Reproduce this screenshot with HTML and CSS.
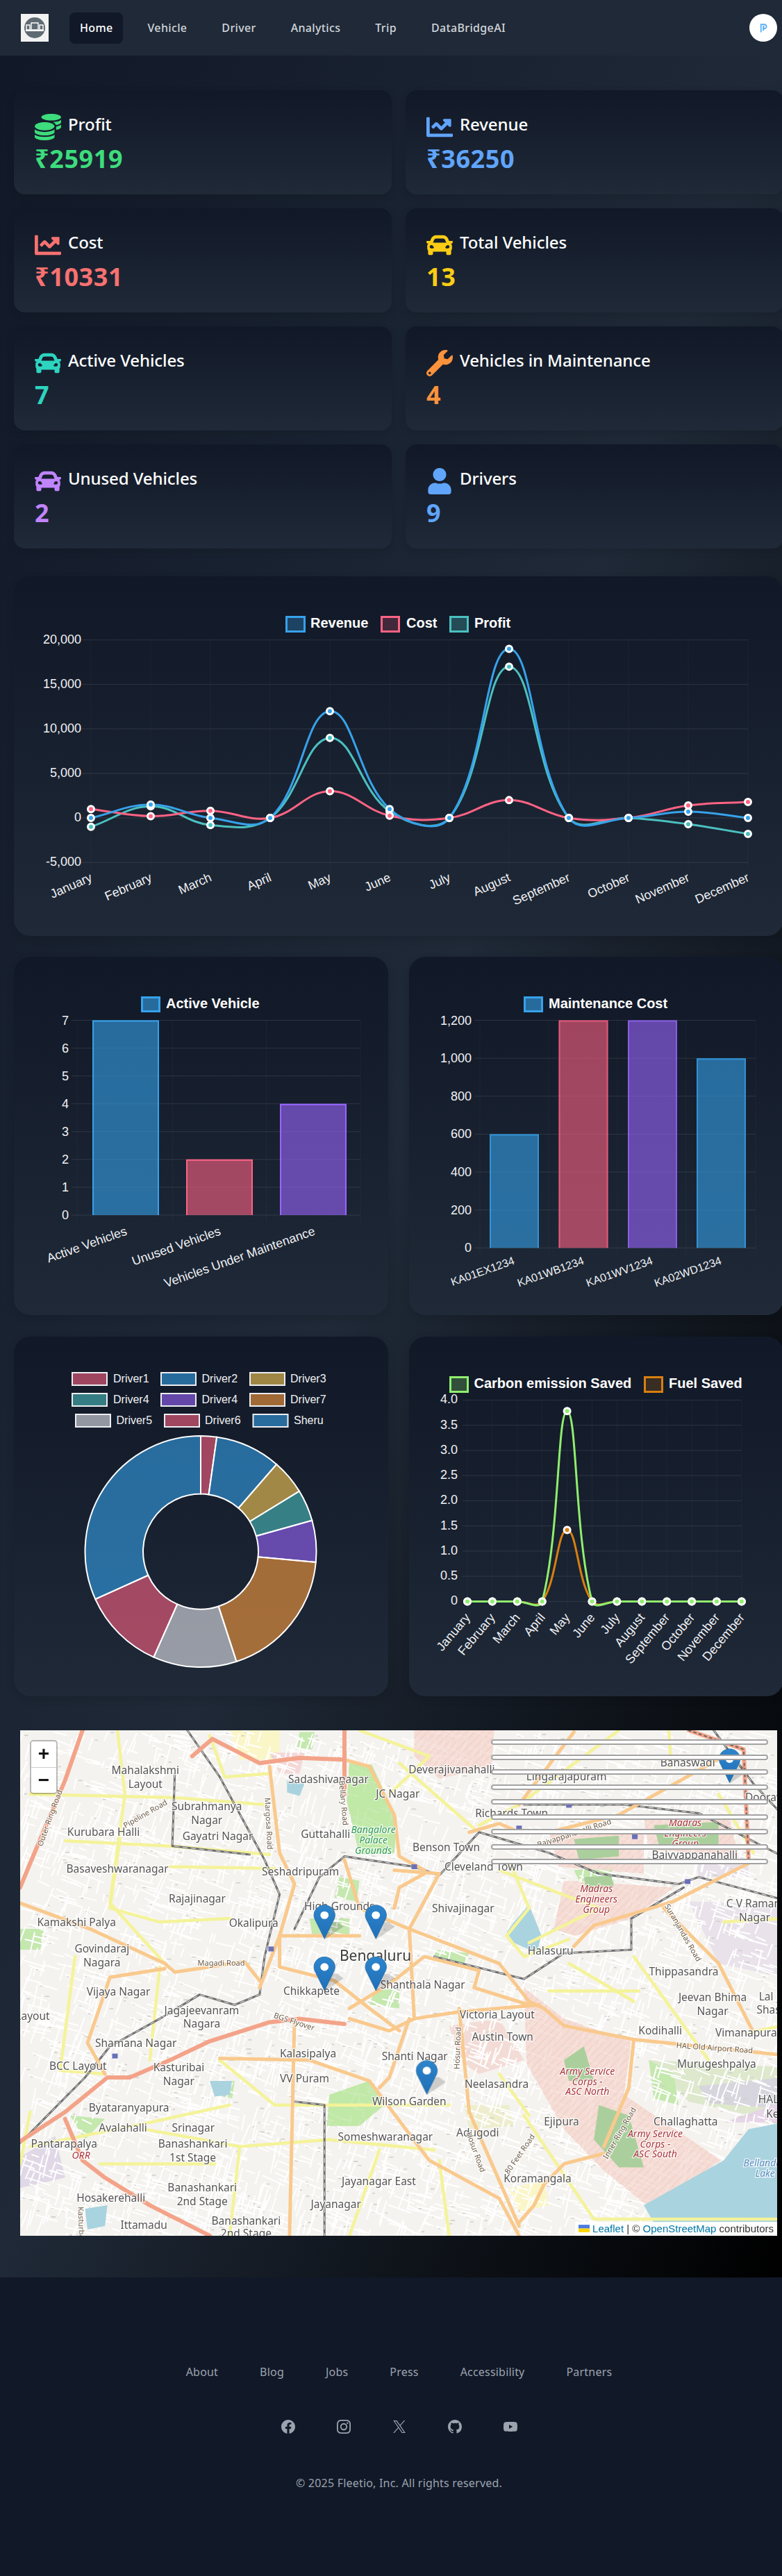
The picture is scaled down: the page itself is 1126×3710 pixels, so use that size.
FILE: index.html
```html
<!DOCTYPE html>
<html lang="en">
<head>
  <meta charset="UTF-8">
  <title>Fleetio Dashboard</title>
  <link rel="stylesheet" href="styles.css">
</head>
<body>

<nav class="topbar">
  <svg class="logo" viewBox="0 0 40 40">
    <rect width="40" height="40" fill="#f2f2f2"/>
    <circle cx="20" cy="20" r="15" fill="#5f6b73"/>
    <path d="M8 16h5v7H8zM15 13h10v10H15zM27 16h5v7h-5z" fill="none" stroke="#fff" stroke-width="1.4"/>
    <path d="M7 24h26" stroke="#fff" stroke-width="2"/>
  </svg>
  <ul class="nav-links">
    <li class="nav-active">Home</li>
    <li>Vehicle</li>
    <li>Driver</li>
    <li>Analytics</li>
    <li>Trip</li>
    <li>DataBridgeAI</li>
  </ul>
  <div class="avatar">
    <svg viewBox="0 0 14 20"><path d="M2 18V3h6.5a4 4 0 0 1 0 8H6.5M6.5 15V7h2" fill="none" stroke="#56aef6" stroke-width="2.4"/></svg>
  </div>
</nav>

<main class="dashboard">

  <section class="stat-grid">
    <div class="stat-card">
      <div class="stat-head">
        <svg class="stat-icon text-green" viewBox="0 0 512 512"><path d="M0 405.3V448c0 35.3 86 64 192 64s192-28.7 192-64v-42.7C342.7 434.4 267.2 448 192 448S41.3 434.4 0 405.3zM320 128c106 0 192-28.7 192-64S426 0 320 0 128 28.7 128 64s86 64 192 64zM0 300.4V352c0 35.3 86 64 192 64s192-28.7 192-64v-51.6c-41.3 34-116.9 51.6-192 51.6S41.3 334.4 0 300.4zm416 11c57.3-11.1 96-31.7 96-55.4v-42.7c-23.2 16.4-57.3 27.6-96 34.5v63.6zM192 160C86 160 0 195.8 0 240s86 80 192 80 192-35.8 192-80-86-80-192-80zm219.3 56.3c60-10.8 100.7-32 100.7-56.3v-42.7c-35.5 25.1-96.5 38.6-160.7 41.8 29.5 14.3 51.2 33.5 60 57.2z"/></svg>
        <h3>Profit</h3>
      </div>
      <p class="stat-value text-green">₹25919</p>
    </div>
    <div class="stat-card">
      <div class="stat-head">
        <svg class="stat-icon text-blue" viewBox="0 0 512 512"><use href="#icon-chart"/></svg>
        <h3>Revenue</h3>
      </div>
      <p class="stat-value text-blue">₹36250</p>
    </div>
    <div class="stat-card">
      <div class="stat-head">
        <svg class="stat-icon text-red" viewBox="0 0 512 512"><use href="#icon-chart"/></svg>
        <h3>Cost</h3>
      </div>
      <p class="stat-value text-red">₹10331</p>
    </div>
    <div class="stat-card">
      <div class="stat-head">
        <svg class="stat-icon text-yellow" viewBox="0 0 512 512"><use href="#icon-car"/></svg>
        <h3>Total Vehicles</h3>
      </div>
      <p class="stat-value text-yellow">13</p>
    </div>
    <div class="stat-card">
      <div class="stat-head">
        <svg class="stat-icon text-teal" viewBox="0 0 512 512"><use href="#icon-car"/></svg>
        <h3>Active Vehicles</h3>
      </div>
      <p class="stat-value text-teal">7</p>
    </div>
    <div class="stat-card">
      <div class="stat-head">
        <svg class="stat-icon text-orange" viewBox="0 0 512 512"><path d="M507.73 109.1c-2.24-9.03-13.54-12.09-20.12-5.51l-74.36 74.36-67.88-11.31-11.31-67.88 74.36-74.36c6.62-6.62 3.43-17.9-5.66-20.16-47.38-11.74-99.55.91-136.58 37.93-39.64 39.64-50.55 97.1-34.05 147.2L18.74 402.76c-24.99 24.99-24.99 65.51 0 90.5 24.99 24.99 65.51 24.99 90.5 0l213.21-213.21c50.12 16.71 107.47 5.68 147.37-34.22 37.07-37.07 49.7-89.32 37.91-136.73zM64 472c-13.25 0-24-10.75-24-24 0-13.26 10.75-24 24-24s24 10.74 24 24c0 13.25-10.75 24-24 24z"/></svg>
        <h3>Vehicles in Maintenance</h3>
      </div>
      <p class="stat-value text-orange">4</p>
    </div>
    <div class="stat-card">
      <div class="stat-head">
        <svg class="stat-icon text-purple" viewBox="0 0 512 512"><use href="#icon-car"/></svg>
        <h3>Unused Vehicles</h3>
      </div>
      <p class="stat-value text-purple">2</p>
    </div>
    <div class="stat-card">
      <div class="stat-head">
        <svg class="stat-icon text-blue" viewBox="0 0 448 512"><path d="M224 256c70.7 0 128-57.3 128-128S294.7 0 224 0 96 57.3 96 128s57.3 128 128 128zm89.6 32h-16.7c-22.2 10.2-46.9 16-72.9 16s-50.6-5.8-72.9-16h-16.7C60.2 288 0 348.2 0 422.4V464c0 26.5 21.5 48 48 48h352c26.5 0 48-21.5 48-48v-41.6c0-74.2-60.2-134.4-134.4-134.4z"/></svg>
        <h3>Drivers</h3>
      </div>
      <p class="stat-value text-blue">9</p>
    </div>
  </section>

  <section class="chart-card chart-wide"><svg id="finance-chart" class="chart-svg"></svg></section>

  <section class="chart-row">
    <div class="chart-card chart-half-a"><svg id="vehicle-chart" class="chart-svg"></svg></div>
    <div class="chart-card chart-half-a"><svg id="maintenance-chart" class="chart-svg"></svg></div>
  </section>

  <section class="chart-row chart-row-low">
    <div class="chart-card chart-half-b"><svg id="driver-chart" class="chart-svg"></svg></div>
    <div class="chart-card chart-half-b"><svg id="carbon-chart" class="chart-svg"></svg></div>
  </section>

  <section class="map-box">
    <svg id="city-map" class="map-svg"></svg>
    <div class="zoom-control">
      <span class="zoom-btn">+</span>
      <span class="zoom-btn">−</span>
    </div>
    <div class="layer-bars">
      <span></span><span></span><span></span><span></span><span></span><span></span><span></span><span></span><span></span>
    </div>
    <div class="attribution">
      <svg class="flag" viewBox="0 0 12 8"><rect width="12" height="4" fill="#4c7be1"/><rect y="4" width="12" height="4" fill="#ffd500"/></svg>
      <a>Leaflet</a> | © <a>OpenStreetMap</a> contributors
    </div>
  </section>

</main>

<footer class="site-footer">
  <ul class="footer-links">
    <li>About</li>
    <li>Blog</li>
    <li>Jobs</li>
    <li>Press</li>
    <li>Accessibility</li>
    <li>Partners</li>
  </ul>
  <div class="footer-icons">
    <svg viewBox="0 0 24 24"><path d="M22 12c0-5.523-4.477-10-10-10S2 6.477 2 12c0 4.991 3.657 9.128 8.438 9.878v-6.987h-2.54V12h2.54V9.797c0-2.506 1.492-3.89 3.777-3.89 1.094 0 2.238.195 2.238.195v2.46h-1.26c-1.243 0-1.63.771-1.63 1.562V12h2.773l-.443 2.89h-2.33v6.988C18.343 21.128 22 16.991 22 12z"/></svg>
    <svg viewBox="0 0 24 24"><path fill-rule="evenodd" d="M12.315 2c2.43 0 2.784.013 3.808.06 1.064.049 1.791.218 2.427.465a4.902 4.902 0 011.772 1.153 4.902 4.902 0 011.153 1.772c.247.636.416 1.363.465 2.427.048 1.067.06 1.407.06 4.123v.08c0 2.643-.012 2.987-.06 4.043-.049 1.064-.218 1.791-.465 2.427a4.902 4.902 0 01-1.153 1.772 4.902 4.902 0 01-1.772 1.153c-.636.247-1.363.416-2.427.465-1.067.048-1.407.06-4.123.06h-.08c-2.643 0-2.987-.012-4.043-.06-1.064-.049-1.791-.218-2.427-.465a4.902 4.902 0 01-1.772-1.153 4.902 4.902 0 01-1.153-1.772c-.247-.636-.416-1.363-.465-2.427-.047-1.024-.06-1.379-.06-3.808v-.63c0-2.43.013-2.784.06-3.808.049-1.064.218-1.791.465-2.427a4.902 4.902 0 011.153-1.772A4.902 4.902 0 015.45 2.525c.636-.247 1.363-.416 2.427-.465C8.901 2.013 9.256 2 11.685 2h.63zm-.081 1.802h-.468c-2.456 0-2.784.011-3.807.058-.975.045-1.504.207-1.857.344-.467.182-.8.398-1.15.748-.35.35-.566.683-.748 1.15-.137.353-.3.882-.344 1.857-.047 1.023-.058 1.351-.058 3.807v.468c0 2.456.011 2.784.058 3.807.045.975.207 1.504.344 1.857.182.466.399.8.748 1.15.35.35.683.566 1.15.748.353.137.882.3 1.857.344 1.054.048 1.37.058 4.041.058h.08c2.597 0 2.917-.01 3.96-.058.976-.045 1.505-.207 1.858-.344.466-.182.8-.398 1.15-.748.35-.35.566-.683.748-1.15.137-.353.3-.882.344-1.857.048-1.055.058-1.37.058-4.041v-.08c0-2.597-.01-2.917-.058-3.96-.045-.976-.207-1.505-.344-1.858a3.097 3.097 0 00-.748-1.15 3.098 3.098 0 00-1.15-.748c-.353-.137-.882-.3-1.857-.344-1.023-.047-1.351-.058-3.807-.058zM12 6.865a5.135 5.135 0 110 10.27 5.135 5.135 0 010-10.27zm0 1.802a3.333 3.333 0 100 6.666 3.333 3.333 0 000-6.666zm5.338-3.205a1.2 1.2 0 110 2.4 1.2 1.2 0 010-2.4z"/></svg>
    <svg viewBox="0 0 24 24"><path d="M13.6823 10.6218L20.2391 3H18.6854L12.9921 9.61788L8.44486 3H3.2002L10.0765 13.0074L3.2002 21H4.75404L10.7663 14.0113L15.5685 21H20.8131L13.6819 10.6218H13.6823ZM11.5541 13.0956L10.8574 12.0991L5.31391 4.16971H7.70053L12.1742 10.5689L12.8709 11.5655L18.6861 19.8835H16.2995L11.5541 13.096V13.0956Z"/></svg>
    <svg viewBox="0 0 24 24"><path d="M12 2C6.477 2 2 6.484 2 12.017c0 4.425 2.865 8.18 6.839 9.504.5.092.682-.217.682-.483 0-.237-.008-.868-.013-1.703-2.782.605-3.369-1.343-3.369-1.343-.454-1.158-1.11-1.466-1.11-1.466-.908-.62.069-.608.069-.608 1.003.07 1.531 1.032 1.531 1.032.892 1.53 2.341 1.088 2.91.832.092-.647.35-1.088.636-1.338-2.22-.253-4.555-1.113-4.555-4.951 0-1.093.39-1.988 1.029-2.688-.103-.253-.446-1.272.098-2.65 0 0 .84-.27 2.75 1.026A9.564 9.564 0 0112 6.844c.85.004 1.705.115 2.504.337 1.909-1.296 2.747-1.027 2.747-1.027.546 1.379.202 2.398.1 2.651.64.7 1.028 1.595 1.028 2.688 0 3.848-2.339 4.695-4.566 4.943.359.309.678.92.678 1.855 0 1.338-.012 2.419-.012 2.747 0 .268.18.58.688.482A10.019 10.019 0 0022 12.017C22 6.484 17.522 2 12 2z"/></svg>
    <svg viewBox="0 0 24 24"><path fill-rule="evenodd" d="M19.812 5.418c.861.23 1.538.907 1.768 1.768C21.998 8.746 22 12 22 12s0 3.255-.418 4.814a2.504 2.504 0 0 1-1.768 1.768c-1.56.419-7.814.419-7.814.419s-6.255 0-7.814-.419a2.505 2.505 0 0 1-1.768-1.768C2 15.255 2 12 2 12s0-3.255.417-4.814a2.507 2.507 0 0 1 1.768-1.768C5.744 5 11.998 5 11.998 5s6.255 0 7.814.418ZM15.194 12 10 15V9l5.194 3Z"/></svg>
  </div>
  <p class="copyright">© 2025 Fleetio, Inc. All rights reserved.</p>
</footer>

<svg class="icon-defs">
  <defs>
    <path id="icon-chart" d="M496 384H64V80c0-8.84-7.16-16-16-16H16C7.16 64 0 71.16 0 80v336c0 17.67 14.33 32 32 32h464c8.84 0 16-7.16 16-16v-32c0-8.84-7.16-16-16-16zM464 96H345.94c-21.38 0-32.09 25.85-16.97 40.97l32.4 32.4L288 242.75l-73.37-73.37c-12.5-12.5-32.76-12.5-45.25 0l-68.69 68.69c-6.25 6.25-6.25 16.38 0 22.63l22.62 22.62c6.25 6.25 16.38 6.25 22.63 0L192 237.25l73.37 73.37c12.5 12.5 32.76 12.5 45.25 0l96-96 32.4 32.4c15.12 15.12 40.97 4.41 40.97-16.97V112c.01-8.84-7.15-16-15.99-16z"/>
    <path id="icon-car" d="M499.99 176h-59.87l-16.64-41.6C406.38 91.63 365.57 64 319.5 64h-127c-46.06 0-86.88 27.63-103.99 70.4L71.87 176H12.01C4.2 176-1.53 183.34.37 190.91l6 24C7.7 220.25 12.5 224 18.01 224h20.07C24.65 235.73 16 252.78 16 272v48c0 16.12 6.16 30.67 16 41.93V416c0 17.67 14.33 32 32 32h32c17.67 0 32-14.33 32-32v-32h256v32c0 17.67 14.33 32 32 32h32c17.67 0 32-14.33 32-32v-54.07c9.84-11.25 16-25.8 16-41.93v-48c0-19.22-8.65-36.27-22.07-48H494c5.51 0 10.31-3.75 11.64-9.09l6-24c1.89-7.57-3.84-14.91-11.65-14.91zm-352.06-17.83c7.29-18.22 24.94-30.17 44.57-30.17h127c19.63 0 37.28 11.95 44.57 30.17L384 208H128l19.93-49.83zM96 319.8c-19.2 0-32-12.76-32-31.9S76.8 256 96 256s48 28.71 48 47.85-28.8 15.95-48 15.95zm320 0c-19.2 0-48 3.19-48-15.95S396.8 256 416 256s32 12.76 32 31.9-12.8 31.9-32 31.9z"/>
  </defs>
</svg>

<script src="charts.js"></script>
<script src="map.js"></script>
</body>
</html>
```

FILE: styles.css
```css
* {
  box-sizing: border-box;
}

body {
  margin: 0;
  font-family: "Noto Sans", sans-serif;
  background-color: #111827;
  overflow-x: hidden;
}

ul {
  list-style: none;
  margin: 0;
  padding: 0;
}

/* top bar */
.topbar {
  display: flex;
  align-items: center;
  height: 80px;
  padding: 0 7px 0 30px;
  background-color: #1f2937;
}

.logo {
  width: 40px;
  height: 40px;
}

.nav-links {
  display: flex;
  gap: 20px;
  margin-left: 30px;
  color: #d1d5db;
  font-size: 16px;
  font-weight: 500;
  letter-spacing: 0.35px;
}

.nav-links li {
  padding: 10px 15px;
  height: 45px;
  line-height: 25px;
  border-radius: 8px;
}

.nav-active {
  background-color: #111827;
  color: #fff;
}

.avatar {
  display: flex;
  align-items: center;
  justify-content: center;
  width: 40px;
  height: 40px;
  margin-left: auto;
  border-radius: 50%;
  background-color: #fff;
}

.avatar svg {
  width: 11px;
  height: 15px;
}

/* main area */
.dashboard {
  padding: 50px 0 60px 20px;
  background: linear-gradient(to bottom right, #111827, #1f2937, #000);
  overflow: hidden;
}

.stat-grid {
  display: grid;
  grid-template-columns: 544px 544px;
  gap: 20px;
}

.stat-card {
  height: 150px;
  padding: 34px 30px;
  border-radius: 16px;
  background: linear-gradient(to bottom, #111827, #1f2937);
  box-shadow: 0 4px 12px rgba(0, 0, 0, 0.12);
}

.stat-head {
  display: flex;
  align-items: flex-start;
  gap: 10px;
}

.stat-icon {
  flex: none;
  width: 38px;
  height: 38px;
  fill: currentColor;
}

.stat-head h3 {
  margin: -1px 0 0;
  font-size: 24px;
  font-weight: 500;
  line-height: 32px;
  letter-spacing: -0.1px;
  color: #fff;
}

.stat-value {
  margin: 7px 0 0;
  font-size: 36px;
  font-weight: 700;
  line-height: 40px;
  letter-spacing: 0.6px;
}

.text-green { color: #3ddc7c; }
.text-blue { color: #60a5fa; }
.text-red { color: #f87171; }
.text-yellow { color: #facc15; }
.text-teal { color: #2dd4bf; }
.text-orange { color: #fb923c; }
.text-purple { color: #c084fc; }

/* charts */
.chart-card {
  border-radius: 24px;
  background: linear-gradient(to bottom, #111827, #1f2937);
  box-shadow: 0 4px 12px rgba(0, 0, 0, 0.12);
  overflow: hidden;
}

.chart-svg {
  display: block;
  width: 100%;
  height: 100%;
}

.chart-wide {
  width: 1108px;
  height: 518px;
  margin-top: 40px;
}

.chart-row {
  display: grid;
  grid-template-columns: 539px 539px;
  gap: 30px;
  margin-top: 30px;
}

.chart-row-low {
  margin-top: 31px;
}

.chart-half-a {
  height: 516px;
}

.chart-half-b {
  height: 518px;
}

.grid-line {
  stroke: rgba(255, 255, 255, 0.1);
  stroke-width: 1;
}

.grid-line-v {
  stroke: rgba(255, 255, 255, 0.035);
  stroke-width: 1;
}

.tick-label {
  font: 18px "Liberation Sans", Arial, sans-serif;
  fill: #f0f1f4;
}

.tick-small {
  font-size: 16px;
}

.legend-label {
  font: bold 20px "Liberation Sans", Arial, sans-serif;
  fill: #fff;
}

.legend-small {
  font: 16px "Liberation Sans", Arial, sans-serif;
  fill: #f0f1f4;
}

/* map */
.map-box {
  position: relative;
  width: 1090px;
  height: 728px;
  margin: 49px 0 0 9px;
  overflow: hidden;
  background-color: #f5f3ef;
}

.map-svg {
  display: block;
  width: 100%;
  height: 100%;
}

.map-label {
  font: 15.5px "Noto Sans", sans-serif;
  fill: #555;
  stroke: rgba(255, 255, 255, 0.8);
  stroke-width: 2.5px;
  paint-order: stroke;
  text-anchor: middle;
}

.map-label-big {
  font-size: 21px;
  fill: #3a3a3a;
}

.map-label-area {
  font-size: 14px;
  font-style: italic;
  fill: #a8343c;
}

.map-label-park {
  font-size: 14px;
  font-style: italic;
  fill: #2e9a57;
}

.map-label-water {
  font-size: 14px;
  font-style: italic;
  fill: #5a8fc0;
}

.map-label-road {
  font-size: 11px;
  fill: #6b5a45;
}

.zoom-control {
  position: absolute;
  left: 14px;
  top: 14px;
  display: flex;
  flex-direction: column;
  width: 40px;
  border: 2px solid rgba(0, 0, 0, 0.25);
  border-radius: 5px;
  background-color: #fff;
  background-clip: padding-box;
}

.zoom-btn {
  height: 37px;
  font: bold 28px/36px "Liberation Sans", Arial, sans-serif;
  color: #111;
  text-align: center;
}

.zoom-btn + .zoom-btn {
  border-top: 1px solid #ccc;
}

.layer-bars {
  position: absolute;
  left: 678px;
  top: 13px;
  display: flex;
  flex-direction: column;
  gap: 13.55px;
  width: 399px;
}

.layer-bars span {
  height: 8px;
  border: 2px solid #a3a3a3;
  border-radius: 4px;
  background-color: #fff;
}

.attribution {
  position: absolute;
  right: 0;
  bottom: 0;
  height: 20px;
  padding: 0 5px;
  font: 15px/20px "Liberation Sans", Arial, sans-serif;
  color: #333;
  white-space: nowrap;
  background-color: rgba(255, 255, 255, 0.85);
}

.attribution a {
  color: #0078a8;
}

.flag {
  width: 16px;
  height: 11px;
}

/* footer */
.site-footer {
  width: 1149px;
  height: 430px;
  padding-top: 124px;
  background-color: #111827;
  color: #9ca3af;
  text-align: center;
}

.footer-links {
  display: flex;
  justify-content: center;
  gap: 60px;
  font-size: 16px;
  line-height: 24px;
  letter-spacing: 0.2px;
}

.footer-icons {
  display: flex;
  justify-content: center;
  gap: 56px;
  margin-top: 55px;
}

.footer-icons svg {
  width: 24px;
  height: 24px;
  fill: currentColor;
}

.copyright {
  margin: 57px 0 0;
  font-size: 16px;
  line-height: 24px;
  letter-spacing: 0.2px;
}

.icon-defs {
  position: absolute;
  width: 0;
  height: 0;
}
```

FILE: charts.js
```js
const MONTHS = ["January", "February", "March", "April", "May", "June", "July", "August", "September", "October", "November", "December"];
const BLUE = "54,162,235", PINK = "255,99,132", TEAL = "75,192,192", PURPLE = "153,102,255", GREEN = "144,238,110", AMBER = "217,127,15", GRAY = "232,234,240";

function rgba(c, a) { return `rgba(${c},${a})`; }

function hline(x1, x2, y) { return `<line class="grid-line" x1="${x1}" x2="${x2}" y1="${y}" y2="${y}"/>`; }
function vline(x, y1, y2) { return `<line class="grid-line-v" x1="${x}" x2="${x}" y1="${y1}" y2="${y2}"/>`; }

function yTick(x, y, text, small) {
  return `<text class="tick-label${small ? " tick-small" : ""}" x="${x}" y="${y + 6}" text-anchor="end">${text}</text>`;
}

function xTick(x, y, text, angle, small) {
  return `<text class="tick-label${small ? " tick-small" : ""}" text-anchor="end" transform="translate(${x} ${y}) rotate(${angle})">${text}</text>`;
}

// x: left of box, w/h: box size, tx: where the text starts
function legendBox(x, y, w, h, color, alpha, text, tx, stroke) {
  const b = stroke || 3;
  return `<rect x="${x + b / 2}" y="${y + b / 2}" width="${w - b}" height="${h - b}" fill="${rgba(color, alpha)}" stroke="${rgba(color, 1)}" stroke-width="${b}"/>` +
    `<text class="legend-label" x="${tx}" y="${y + h / 2 + 5}">${text}</text>`;
}

// same curve as chart.js with tension .4
function spline(pts) {
  let d = `M${pts[0][0]} ${pts[0][1]}`;
  const ctrl = pts.map((p, i) => {
    const a = pts[i - 1] || p, b = pts[i + 1] || p;
    const d1 = Math.hypot(p[0] - a[0], p[1] - a[1]), d2 = Math.hypot(b[0] - p[0], b[1] - p[1]);
    const s = d1 + d2 || 1;
    const dx = b[0] - a[0], dy = b[1] - a[1];
    return {
      px: p[0] - 0.4 * d1 / s * dx, py: p[1] - 0.4 * d1 / s * dy,
      nx: p[0] + 0.4 * d2 / s * dx, ny: p[1] + 0.4 * d2 / s * dy
    };
  });
  for (let i = 1; i < pts.length; i++) {
    d += `C${ctrl[i - 1].nx} ${ctrl[i - 1].ny} ${ctrl[i].px} ${ctrl[i].py} ${pts[i][0]} ${pts[i][1]}`;
  }
  return d;
}

function series(pts, color, width) {
  let out = `<path d="${spline(pts)}" fill="none" stroke="${rgba(color, 1)}" stroke-width="${width}"/>`;
  pts.forEach(p => {
    out += `<circle cx="${p[0]}" cy="${p[1]}" r="4.5" fill="${rgba(color, 1)}" stroke="#fff" stroke-width="3"/>`;
  });
  return out;
}

function setChart(id, x, y, w, h, body) {
  const svg = document.getElementById(id);
  svg.setAttribute("viewBox", `${x} ${y} ${w} ${h}`);
  svg.innerHTML = body;
}

function drawFinance() {
  const X = i => 131 + i * 86, Y = v => 1178 - v * 0.012816;
  let s = "";
  MONTHS.forEach((m, i) => { s += vline(X(i), 921, 1252); });
  [20000, 15000, 10000, 5000, 0, -5000].forEach(v => {
    s += hline(113, 1077, Y(v));
    s += yTick(117, Y(v) - 1, v.toLocaleString("en-US"));
  });
  MONTHS.forEach((m, i) => { s += xTick(X(i) + 3, 1268, m, -24); });

  const revenue = [0, 1500, 0, 0, 12000, 1000, 0, 19000, 0, 0, 700, 0];
  const cost = [1000, 200, 800, 0, 3000, 250, 0, 2000, 0, 0, 1400, 1800];
  const profit = [-1000, 1300, -800, 0, 9000, 750, 0, 17000, 0, 0, -700, -1800];
  const pts = arr => arr.map((v, i) => [X(i), Y(v)]);
  s += series(pts(profit), TEAL, 3) + series(pts(cost), PINK, 3) + series(pts(revenue), BLUE, 3);

  s += legendBox(411, 887, 29, 24, BLUE, 0.3, "Revenue", 447);
  s += legendBox(548, 887, 28, 24, PINK, 0.2, "Cost", 585);
  s += legendBox(647, 887, 28, 24, TEAL, 0.3, "Profit", 683);
  setChart("finance-chart", 20, 830, 1108, 518, s);
}

function drawBars(id, opt) {
  let s = "";
  opt.gridX.forEach(x => { s += vline(x, opt.top, opt.gridBottom); });
  opt.ticks.forEach((t, i) => {
    const y = opt.zero - (opt.zero - opt.top) * i / (opt.ticks.length - 1);
    s += hline(opt.gridX[0] - 8, opt.gridX[opt.gridX.length - 1], y);
    s += yTick(opt.gridX[0] - 12, y, t);
  });
  opt.bars.forEach(b => {
    const y = opt.zero - (opt.zero - opt.top) * b.v;
    const a = opt.borderAlpha;
    s += `<rect x="${b.x}" y="${y}" width="${b.w}" height="${opt.zero - y}" fill="${rgba(b.c, 0.6)}"/>`;
    s += `<path d="M${b.x + 1} ${opt.zero}V${y + 1}H${b.x + b.w - 1}V${opt.zero}" fill="none" stroke="${rgba(b.c, a)}" stroke-width="2"/>`;
    s += xTick(b.lx, b.ly, b.label, -19.5, opt.small);
  });
  s += legendBox(opt.lg[0], 1435, 28, 23, BLUE, 0.6, opt.title, opt.lg[1]);
  setChart(id, opt.vx, 1378, 539, 516, s);
}

function drawVehicle() {
  drawBars("vehicle-chart", {
    vx: 20, top: 1469.5, zero: 1750, gridBottom: 1760, gridX: [111, 248.5, 383.5, 519],
    ticks: [0, 1, 2, 3, 4, 5, 6, 7], borderAlpha: 1, title: "Active Vehicle", lg: [203, 239],
    bars: [
      { x: 133, w: 96, v: 1, c: BLUE, label: "Active Vehicles", lx: 184, ly: 1778 },
      { x: 268, w: 96, v: 2 / 7, c: PINK, label: "Unused Vehicles", lx: 319, ly: 1778 },
      { x: 403, w: 96, v: 4 / 7, c: PURPLE, label: "Vehicles Under Maintenance", lx: 455, ly: 1778 }
    ]
  });
}

function drawMaintenance() {
  drawBars("maintenance-chart", {
    vx: 589, top: 1469.5, zero: 1797.3, gridBottom: 1806, gridX: [691, 790, 889, 988, 1088],
    ticks: ["0", "200", "400", "600", "800", "1,000", "1,200"], borderAlpha: 0.7, title: "Maintenance Cost", lg: [754, 790], small: true,
    bars: [
      { x: 705, w: 71, v: 0.5, c: BLUE, label: "KA01EX1234", lx: 742, ly: 1820 },
      { x: 804.5, w: 71, v: 1, c: PINK, label: "KA01WB1234", lx: 842, ly: 1820 },
      { x: 904, w: 71, v: 1, c: PURPLE, label: "KA01WV1234", lx: 941, ly: 1820 },
      { x: 1003, w: 71, v: 5 / 6, c: BLUE, label: "KA02WD1234", lx: 1040, ly: 1820 }
    ]
  });
}

function drawDriver() {
  const legend = [
    ["Driver1", PINK, 103, 163, 1976], ["Driver2", BLUE, 231, 290.5, 1976], ["Driver3", "255,206,86", 359, 418, 1976],
    ["Driver4", TEAL, 103, 163, 2006], ["Driver4", PURPLE, 231, 290.5, 2006], ["Driver7", "255,159,64", 359, 418, 2006],
    ["Driver5", GRAY, 108, 167.5, 2036], ["Driver6", PINK, 236, 295, 2036], ["Sheru", BLUE, 363.5, 423, 2036]
  ];
  let s = "";
  legend.forEach(l => {
    s += `<rect x="${l[2] + 1}" y="${l[4] + 1}" width="50" height="18" fill="${rgba(l[1], 0.6)}" stroke="#eceef2" stroke-width="2"/>`;
    s += `<text class="legend-small" x="${l[3]}" y="${l[4] + 15}">${l[0]}</text>`;
  });

  const cx = 289, cy = 2234.6, R = 166.5, r = 83;
  const slices = [
    [8, PINK], [41, BLUE], [58.5, "255,206,86"], [74.4, TEAL], [95.3, PURPLE],
    [162, "255,159,64"], [204, GRAY], [245.7, PINK], [360, BLUE]
  ];
  const pt = (rad, deg) => {
    const t = (deg - 90) * Math.PI / 180;
    return `${cx + rad * Math.cos(t)} ${cy + rad * Math.sin(t)}`;
  };
  let from = 0;
  slices.forEach(sl => {
    const big = sl[0] - from > 180 ? 1 : 0;
    s += `<path d="M${pt(R, from)}A${R} ${R} 0 ${big} 1 ${pt(R, sl[0])}L${pt(r, sl[0])}A${r} ${r} 0 ${big} 0 ${pt(r, from)}Z" fill="${rgba(sl[1], 0.6)}" stroke="#fff" stroke-width="2"/>`;
    from = sl[0];
  });
  setChart("driver-chart", 20, 1925, 539, 518, s);
}

function drawCarbon() {
  const X = i => 673 + i * 35.9, Y = v => 2306.4 - v * 72.5;
  let s = "";
  MONTHS.forEach((m, i) => { s += vline(X(i), 2016, 2316); });
  ["0", "0.5", "1.0", "1.5", "2.0", "2.5", "3.0", "3.5", "4.0"].forEach((t, i) => {
    s += hline(666, 1068, Y(i * 0.5));
    s += yTick(659, Y(i * 0.5) - 1, t);
  });
  MONTHS.forEach((m, i) => { s += xTick(X(i) + 5, 2330, m, -50); });

  const zero = MONTHS.map(() => 0);
  const fuel = zero.slice(); fuel[4] = 1.42;
  const carbon = zero.slice(); carbon[4] = 3.78;
  const pts = arr => arr.map((v, i) => [X(i), Y(v)]);
  s += series(pts(fuel), AMBER, 3) + series(pts(carbon), GREEN, 3);

  s += legendBox(647, 1982, 28, 24, GREEN, 0.25, "Carbon emission Saved", 682.5);
  s += legendBox(927, 1982, 28, 24, AMBER, 0.2, "Fuel Saved", 963);
  setChart("carbon-chart", 589, 1925, 539, 518, s);
}

drawFinance();
drawVehicle();
drawMaintenance();
drawDriver();
drawCarbon();
```

FILE: map.js
```js
// coordinates below are read off a 1518x1463 tracing of the map, mp() brings them to real pixels
function mx(x) { return (x - 40) / 1.392; }
function my(y) { return (y - 45) / 2.01; }
function mp(list) { return list.map(p => `${mx(p[0]).toFixed(1)} ${my(p[1]).toFixed(1)}`).join(" "); }
function poly(list, fill, extra) { return `<polygon points="${mp(list)}" fill="${fill}" ${extra || ""}/>`; }
function road(list, color, width, extra) { return `<polyline points="${mp(list)}" fill="none" stroke="${color}" stroke-width="${width}" stroke-linejoin="round" stroke-linecap="round" ${extra || ""}/>`; }

const AREAS = [
  [[[830, 45], [990, 45], [985, 150], [880, 185], [830, 120]], "url(#hatch)"],
  [[[1050, 790], [1130, 880], [1265, 945], [1250, 1100], [1445, 1290], [1300, 1425], [1210, 1320], [1130, 1200], [1055, 1010]], "url(#hatch)"],
  [[[1130, 480], [1350, 500], [1265, 590], [1150, 640], [1110, 620]], "url(#hatch)"],
  [[[1290, 300], [1460, 290], [1480, 410], [1300, 390]], "url(#hatch)"],
  [[[1100, 340], [1290, 330], [1290, 460], [1120, 440]], "url(#hatch)"],
  [[[900, 900], [1000, 880], [1050, 1000], [960, 1040], [920, 1000]], "#f3dcd6"],
  [[[1380, 540], [1568, 550], [1568, 760], [1440, 720]], "#e9e2ea"],
  [[[1390, 400], [1500, 410], [1500, 470], [1400, 470]], "#e9e2ea"],
  [[[40, 1280], [110, 1220], [130, 1340], [40, 1370]], "#e0d8e6"],
  [[[460, 45], [560, 45], [560, 130], [480, 130]], "#fbf6c8"],
  [[[540, 110], [610, 110], [600, 170], [560, 170]], "#f4d8d8"],
  [[[1300, 1000], [1568, 1020], [1568, 1180], [1380, 1120]], "#dde8cc"],
  [[[1400, 1075], [1568, 1050], [1568, 1140], [1420, 1125]], "#d7d5dd"],
  [[[1450, 1180], [1568, 1120], [1568, 1180]], "#e6d5e6"],
  [[[930, 1130], [1020, 1130], [1030, 1190], [940, 1200]], "#eeeecf"],
  [[[1020, 1370], [1090, 1350], [1100, 1420], [1040, 1440]], "#fbf6c8"]
];

const PARKS = [
  [[700, 140], [745, 145], [795, 300], [790, 400], [720, 405], [695, 250]],
  [[660, 1100], [740, 1060], [770, 1130], [720, 1190], [655, 1190]],
  [[680, 470], [720, 480], [715, 540], [670, 530]],
  [[620, 590], [700, 590], [700, 635], [625, 635]],
  [[750, 800], [800, 790], [800, 850], [740, 840]],
  [[1150, 450], [1230, 440], [1230, 500], [1170, 510]],
  [[1300, 1000], [1350, 1040], [1360, 1130], [1310, 1110]],
  [[40, 620], [90, 620], [80, 680], [40, 680]],
  [[140, 1160], [210, 1170], [170, 1230]],
  [[600, 50], [630, 50], [625, 100], [595, 95]],
  [[870, 680], [940, 690], [930, 720], [870, 710]],
  [[430, 1060], [470, 1060], [465, 1110], [430, 1100]]
];

// darker green patches inside the military land
const SCRUB = [
  [[1200, 1130], [1260, 1160], [1290, 1310], [1240, 1310], [1190, 1230]],
  [[1130, 1000], [1170, 960], [1190, 1060], [1140, 1060]],
  [[1150, 360], [1240, 350], [1240, 410], [1160, 420]],
  [[1310, 320], [1440, 310], [1440, 380], [1320, 375]],
  [[1170, 470], [1225, 465], [1230, 500], [1175, 510]]
];

const WATER = [
  [[1030, 600], [1060, 550], [1085, 640], [1075, 690], [1030, 660], [1015, 630]],
  [[1568, 1180], [1500, 1200], [1450, 1290], [1290, 1420], [1310, 1470], [1568, 1468]],
  [[170, 1430], [215, 1420], [210, 1480], [175, 1490]],
  [[575, 190], [610, 200], [600, 235], [575, 225]],
  [[420, 1060], [465, 1060], [460, 1100], [430, 1105]]
];

const RAILS = [
  [[375, 45], [440, 180], [530, 420], [560, 520], [530, 700], [520, 810]],
  [[690, 410], [640, 470], [590, 620]],
  [[690, 410], [830, 440], [880, 465], [960, 340], [1100, 400], [1200, 460], [1360, 490], [1400, 470], [1568, 535]],
  [[870, 700], [1050, 765], [1130, 690], [1265, 680], [1265, 590], [1370, 500]],
  [[520, 810], [470, 840], [400, 810], [320, 880], [220, 960], [170, 1050], [40, 1240]],
  [[590, 1120], [650, 1130], [650, 1508]],
  [[1050, 260], [1250, 260], [1400, 285], [1568, 410]],
  [[350, 170], [345, 380], [500, 405]],
  [[1430, 45], [1510, 200], [1568, 290]]
];

const STATIONS = [[830, 440], [1140, 262], [1040, 328], [1272, 353], [1378, 483], [543, 678], [230, 988]];

const YELLOW = [
  [[235, 45], [250, 230], [220, 545], [330, 720]], [[60, 230], [350, 240], [530, 260]], [[130, 365], [340, 380], [540, 405]],
  [[340, 440], [550, 445]], [[240, 360], [220, 560], [320, 600], [460, 590]], [[150, 700], [120, 1030], [210, 1040]],
  [[440, 1000], [550, 1130], [640, 1130], [900, 1130]], [[290, 1200], [480, 1250], [660, 1230], [870, 1260]],
  [[60, 1250], [300, 1180], [460, 1130]], [[480, 1250], [460, 1508]], [[320, 730], [300, 1000]], [[760, 1260], [700, 1508]],
  [[880, 1290], [900, 1508]], [[1050, 1160], [1190, 1460], [1568, 1460]], [[1000, 450], [1200, 560], [1060, 660]],
  [[720, 45], [860, 120], [780, 230]], [[420, 60], [450, 180], [540, 170]], [[800, 140], [950, 330]], [[1240, 45], [1040, 260], [960, 320]],
  [[1450, 600], [1568, 590]], [[1270, 700], [1420, 1000]], [[1140, 720], [1270, 830]], [[1100, 800], [1280, 800]],
  [[1500, 920], [1568, 900]], [[1000, 1040], [1060, 1160]], [[200, 1300], [430, 1300]], [[60, 1150], [40, 1300]],
  [[1020, 420], [1060, 560], [1015, 640], [1050, 700], [1140, 650]], [[1340, 45], [1345, 150]], [[1440, 230], [1510, 400]]
];

const ORANGE = [
  [[690, 130], [740, 150], [790, 290], [800, 410], [850, 450]],
  [[690, 420], [720, 560], [820, 620], [1000, 720]],
  [[560, 640], [720, 640]], [[560, 640], [560, 730], [670, 770], [740, 850], [800, 915]],
  [[1000, 720], [1060, 830], [1090, 850], [1130, 900], [1270, 940], [1568, 985]],
  [[1150, 670], [1190, 610], [1350, 540], [1500, 430]],
  [[830, 880], [920, 860], [1080, 840]],
  [[820, 880], [780, 1050], [760, 1080]],
  [[440, 995], [620, 1000], [740, 1060], [860, 1290], [1000, 1400], [1040, 1508]],
  [[920, 850], [940, 1150], [1040, 1480]],
  [[590, 880], [580, 1508]],
  [[540, 150], [560, 400], [590, 490], [560, 640], [520, 790]],
  [[40, 545], [180, 620], [330, 720], [350, 745], [490, 715], [520, 770]],
  [[330, 735], [220, 760], [175, 950], [210, 1040]],
  [[700, 850], [780, 780], [850, 700], [960, 740], [950, 790], [1060, 840]],
  [[1270, 940], [1260, 1080], [1210, 1250]],
  [[1330, 560], [1440, 720], [1510, 920]],
  [[790, 450], [880, 460], [820, 620], [830, 880]],
  [[850, 460], [800, 500], [790, 560]],
  [[700, 880], [780, 915], [830, 880]],
  [[1090, 1360], [1070, 1420], [1040, 1470]], [[1210, 1270], [1130, 1300], [1090, 1360]],
  [[1040, 260], [1150, 50]], [[1100, 340], [1240, 290], [1450, 120]], [[940, 340], [1000, 315], [1040, 340]]
];

const TRUNK = [
  [[385, 120], [425, 70], [520, 140], [600, 125], [690, 130]],
  [[690, 45], [690, 230]],
  [[165, 45], [130, 190], [60, 430], [40, 500]],
  [[690, 895], [600, 880], [540, 890], [420, 945], [340, 1000], [260, 1050], [215, 1050], [130, 1150], [40, 1235]],
  [[130, 1170], [165, 1290], [210, 1340], [300, 1420], [420, 1508]],
  [[1380, 45], [1490, 100], [1500, 420]]
];

const LABELS = [
  ["Mahalakshmi", 291, 162], ["Layout", 291, 201], ["Sadashivanagar", 658, 187], ["Deverajivanahalli", 905, 160],
  ["Lingarajapuram", 1135, 180], ["Banaswadi", 1378, 140], ["JC Nagar", 797, 229], ["Subrahmanya", 414, 266], ["Nagar", 414, 306],
  ["Kurubara Halli", 207, 340], ["Gayatri Nagar", 436, 352], ["Guttahalli", 652, 346], ["Benson Town", 894, 385], ["Richards Town", 1025, 287],
  ["Doorav", 1530, 240], ["Baiyyappanahalli", 1392, 406], ["Basaveshwaranagar", 235, 446], ["Seshadripuram", 602, 454],
  ["Cleveland Town", 969, 441], ["Rajajinagar", 395, 533], ["High Grounds", 680, 555], ["Shivajinagar", 928, 561], ["C V Raman", 1510, 548],
  ["Nagar", 1512, 588], ["Kamakshi Palya", 153, 602], ["Okalipura", 508, 603], ["Govindaraj", 204, 679], ["Nagara", 204, 718],
  ["Halasuru", 1103, 684], ["Thippasandra", 1370, 744], ["Shanthala Nagar", 847, 782], ["Chikkapete", 624, 800], ["Vijaya Nagar", 237, 802],
  ["Jeevan Bhima", 1428, 818], ["Nagar", 1428, 858], ["Lal B", 1545, 816], ["Shas", 1540, 855], ["Layout", 65, 874], ["Jagajeevanram", 404, 856],
  ["Nagara", 404, 896], ["Victoria Layout", 996, 868], ["Kodihalli", 1323, 916], ["Vimanapura", 1495, 921], ["Austin Town", 1007, 933],
  ["Shamana Nagar", 272, 951], ["Kalasipalya", 617, 981], ["Shanti Nagar", 831, 990], ["Murugeshpalya", 1436, 1012], ["BCC Layout", 156, 1018],
  ["Kasturibai", 358, 1022], ["Nagar", 358, 1062], ["VV Puram", 610, 1054], ["Neelasandra", 995, 1071], ["Wilson Garden", 820, 1120],
  ["Byataranyapura", 258, 1139], ["Ejipura", 1125, 1178], ["Challaghatta", 1374, 1178], ["Avalahalli", 246, 1196], ["Srinagar", 387, 1196],
  ["Adugodi", 957, 1211], ["Someshwaranagar", 772, 1222], ["Pantarapalya", 128, 1243], ["Banashankari", 386, 1243], ["1st Stage", 386, 1283],
  ["Koramangala", 1077, 1344], ["Jayanagar East", 759, 1352], ["Banashankari", 405, 1369], ["2nd Stage", 405, 1409], ["Hosakerehalli", 222, 1399],
  ["Jayanagar", 673, 1417], ["Ittamadu", 288, 1479], ["Banashankari", 493, 1465], ["2nd Stage", 493, 1503], ["HAL", 1540, 1115], ["Ke", 1548, 1157],
  ["Bengaluru", 752, 702, "map-label-big"],
  ["Madras", 1373, 312, "map-label-area"], ["Engineers", 1373, 342, "map-label-area"], ["Group", 1373, 372, "map-label-area"],
  ["Madras", 1195, 503, "map-label-area"], ["Engineers", 1195, 533, "map-label-area"], ["Group", 1195, 563, "map-label-area"],
  ["Army Service", 1177, 1031, "map-label-area"], ["Corps -", 1177, 1061, "map-label-area"], ["ASC North", 1177, 1091, "map-label-area"],
  ["Army Service", 1313, 1212, "map-label-area"], ["Corps -", 1313, 1242, "map-label-area"], ["ASC South", 1313, 1272, "map-label-area"],
  ["ORR", 162, 1275, "map-label-area"],
  ["Bangalore", 748, 333, "map-label-park"], ["Palace", 748, 363, "map-label-park"], ["Grounds", 748, 393, "map-label-park"],
  ["Bellandu", 1528, 1297, "map-label-water"], ["Lake", 1533, 1327, "map-label-water"],
  ["Magadi Road", 443, 717, "map-label-road"], ["BGS Flyover", 590, 886, "map-label-road", 18],
  ["HAL Old Airport Road", 1432, 962, "map-label-road", 4], ["Pipeline Road", 290, 285, "map-label-road", -30],
  ["Outer Ring Road", 98, 298, "map-label-road", -70], ["Bellary Road", 690, 255, "map-label-road", 85],
  ["Margosa Road", 540, 315, "map-label-road", 87], ["Hosur Road", 915, 965, "map-label-road", -88],
  ["Hosur Road", 955, 1265, "map-label-road", 70], ["Inner Ring Road", 1240, 1210, "map-label-road", -60],
  ["80 Feet Road", 1040, 1270, "map-label-road", -55], ["Suranjandas Road", 1370, 630, "map-label-road", 60],
  ["Baiyappanahalli Road", 1150, 340, "map-label-road", -18], ["Kasturba Road", 165, 1500, "map-label-road", 88]
];

const MARKERS = [[650, 650], [753, 650], [650, 800], [753, 800], [855, 1100], [1462, 198]];

// small pseudo random, so the street texture stays the same on every load
let seed = 7;
function rnd() {
  seed = (seed * 16807) % 2147483647;
  return seed / 2147483647;
}

function streetTexture(w, h) {
  let white = "", gray = "";
  for (let i = 0; i < 4200; i++) {
    const x = rnd() * w, y = rnd() * h;
    const a = (rnd() < 0.5 ? 0.2 : 1.75) + rnd() * 0.25;
    const l = 10 + rnd() * 26;
    white += `M${x.toFixed(1)} ${y.toFixed(1)}l${(Math.cos(a) * l).toFixed(1)} ${(Math.sin(a) * l).toFixed(1)}`;
    if (i % 3 === 0) {
      gray += `M${(x + 3).toFixed(1)} ${(y + 3).toFixed(1)}h${(rnd() * 5 + 2).toFixed(1)}`;
    }
  }
  return `<path d="${gray}" stroke="#d2cfca" stroke-width="1.6" fill="none"/><path d="${white}" stroke="#fff" stroke-width="2" fill="none"/>`;
}

function marker(tip) {
  const x = mx(tip[0]), y = my(tip[1]);
  return `<g transform="translate(${x - 16} ${y - 50}) scale(1.28 1.22)">` +
    `<path d="M13 41 L34 26 L26 20 L15 22Z" fill="rgba(0,0,0,0.16)"/>` +
    `<path d="M12.5 .6C5.9 .6 .6 5.9 .6 12.5c0 2.4.9 5 2.2 7.2l9.7 20.7 9.7-20.7c1.3-2.2 2.2-4.8 2.2-7.2C24.4 5.9 19.1 .6 12.5 .6z" fill="url(#pin-fill)" stroke="#2a6ca3" stroke-width=".6"/>` +
    `<circle cx="12.5" cy="12.5" r="4.6" fill="#fff"/></g>`;
}

function drawMap() {
  const W = 1090, H = 728;
  let base = `<rect width="${W}" height="${H}" fill="#f5f3ef"/>`;
  AREAS.forEach(a => { base += poly(a[0], a[1]); });
  PARKS.forEach(p => { base += poly(p, "#c4e8ae"); });
  base += streetTexture(W, H);
  // land use that the street texture must not cover
  AREAS.slice(0, 5).forEach(a => { base += poly(a[0], a[1], 'opacity=".82"'); });
  PARKS.slice(0, 2).forEach(p => { base += poly(p, "#bfe8a6", 'opacity=".85"'); });
  SCRUB.forEach(p => { base += poly(p, "#abcf9c"); });
  WATER.forEach(w => { base += poly(w, "#a9d3df"); });
  YELLOW.forEach(r => { base += road(r, "#f4f39a", 4.5); });
  RAILS.forEach(r => { base += road(r, "#6f6f6f", 3) + road(r, "#e8e8e8", 1, 'stroke-dasharray="6 6"'); });
  ORANGE.forEach(r => { base += road(r, "#f9c98d", 5); });
  TRUNK.forEach(r => { base += road(r, "#f3a389", 6); });
  base += road(TRUNK[5], "#666", 2, 'stroke-dasharray="3 5"');
  STATIONS.forEach(s => { base += `<rect x="${mx(s[0]) - 4}" y="${my(s[1]) - 3.5}" width="8" height="7" fill="#6b70b8"/>`; });

  let text = "";
  LABELS.forEach(l => {
    const cls = l[3] ? `map-label ${l[3]}` : "map-label";
    const rot = l[4] ? ` transform="rotate(${l[4]} ${mx(l[1]).toFixed(1)} ${my(l[2]).toFixed(1)})"` : "";
    text += `<text class="${cls}" x="${mx(l[1]).toFixed(1)}" y="${(my(l[2]) + 5).toFixed(1)}"${rot}>${l[0]}</text>`;
  });

  const svg = document.getElementById("city-map");
  svg.setAttribute("viewBox", `0 0 ${W} ${H}`);
  svg.innerHTML = `<defs>
      <filter id="soft"><feGaussianBlur stdDeviation="0.7"/></filter>
      <filter id="soft-text"><feGaussianBlur stdDeviation="0.3"/></filter>
      <pattern id="hatch" width="8" height="8" patternUnits="userSpaceOnUse" patternTransform="rotate(45)">
        <rect width="8" height="8" fill="#f5dcd4"/><line x1="0" y1="0" x2="0" y2="8" stroke="#ecc9c0" stroke-width="1.4"/>
      </pattern>
      <linearGradient id="pin-fill" x1="0" y1="0" x2="0" y2="1"><stop offset="0" stop-color="#2e85cb"/><stop offset="1" stop-color="#1f6fb8"/></linearGradient>
    </defs>
    <g filter="url(#soft)">${base}</g><g filter="url(#soft-text)">${text}</g>${MARKERS.map(marker).join("")}`;
}

drawMap();
```
